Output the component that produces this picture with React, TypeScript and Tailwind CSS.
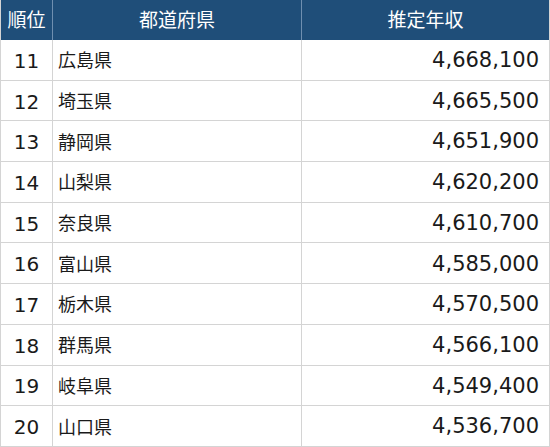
import React from "react";

const rows = [
  { rank: 11, pref: "広島県", income: "4,668,100" },
  { rank: 12, pref: "埼玉県", income: "4,665,500" },
  { rank: 13, pref: "静岡県", income: "4,651,900" },
  { rank: 14, pref: "山梨県", income: "4,620,200" },
  { rank: 15, pref: "奈良県", income: "4,610,700" },
  { rank: 16, pref: "富山県", income: "4,585,000" },
  { rank: 17, pref: "栃木県", income: "4,570,500" },
  { rank: 18, pref: "群馬県", income: "4,566,100" },
  { rank: 19, pref: "岐阜県", income: "4,549,400" },
  { rank: 20, pref: "山口県", income: "4,536,700" },
];

export default function App() {
  return (
    <div
      className="w-[550px] h-[447px] bg-white text-[#1a1a1a] overflow-hidden"
      style={{ fontFamily: '"DejaVu Sans", "Noto Sans CJK JP", sans-serif' }}
    >
      <div className="border-l border-r border-[#d4d4d4] w-[550px]">
        {/* Header */}
        <div className="grid grid-cols-[51px_249px_1fr] h-[40px] bg-[#1f4e79] text-white text-[19px]">
          <div className="flex items-center justify-center">順位</div>
          <div className="flex items-center justify-center border-l border-[#6f8fb0]">都道府県</div>
          <div className="flex items-center justify-center border-l border-[#6f8fb0]">推定年収</div>
        </div>

        {/* Body */}
        {rows.map((r) => (
          <div
            key={r.rank}
            className="grid grid-cols-[51px_249px_1fr] h-[40.7px] border-b border-[#d4d4d4]"
          >
            <div className="flex items-center justify-center pt-[2px] text-[20px]">{r.rank}</div>
            <div className="flex items-center pl-[5px] pt-[2px] text-[18px] border-l border-[#d4d4d4]">{r.pref}</div>
            <div className="flex items-center justify-end pr-[10px] pt-[2px] text-[21px] border-l border-[#d4d4d4]">
              {r.income}
            </div>
          </div>
        ))}
      </div>
    </div>
  );
}
